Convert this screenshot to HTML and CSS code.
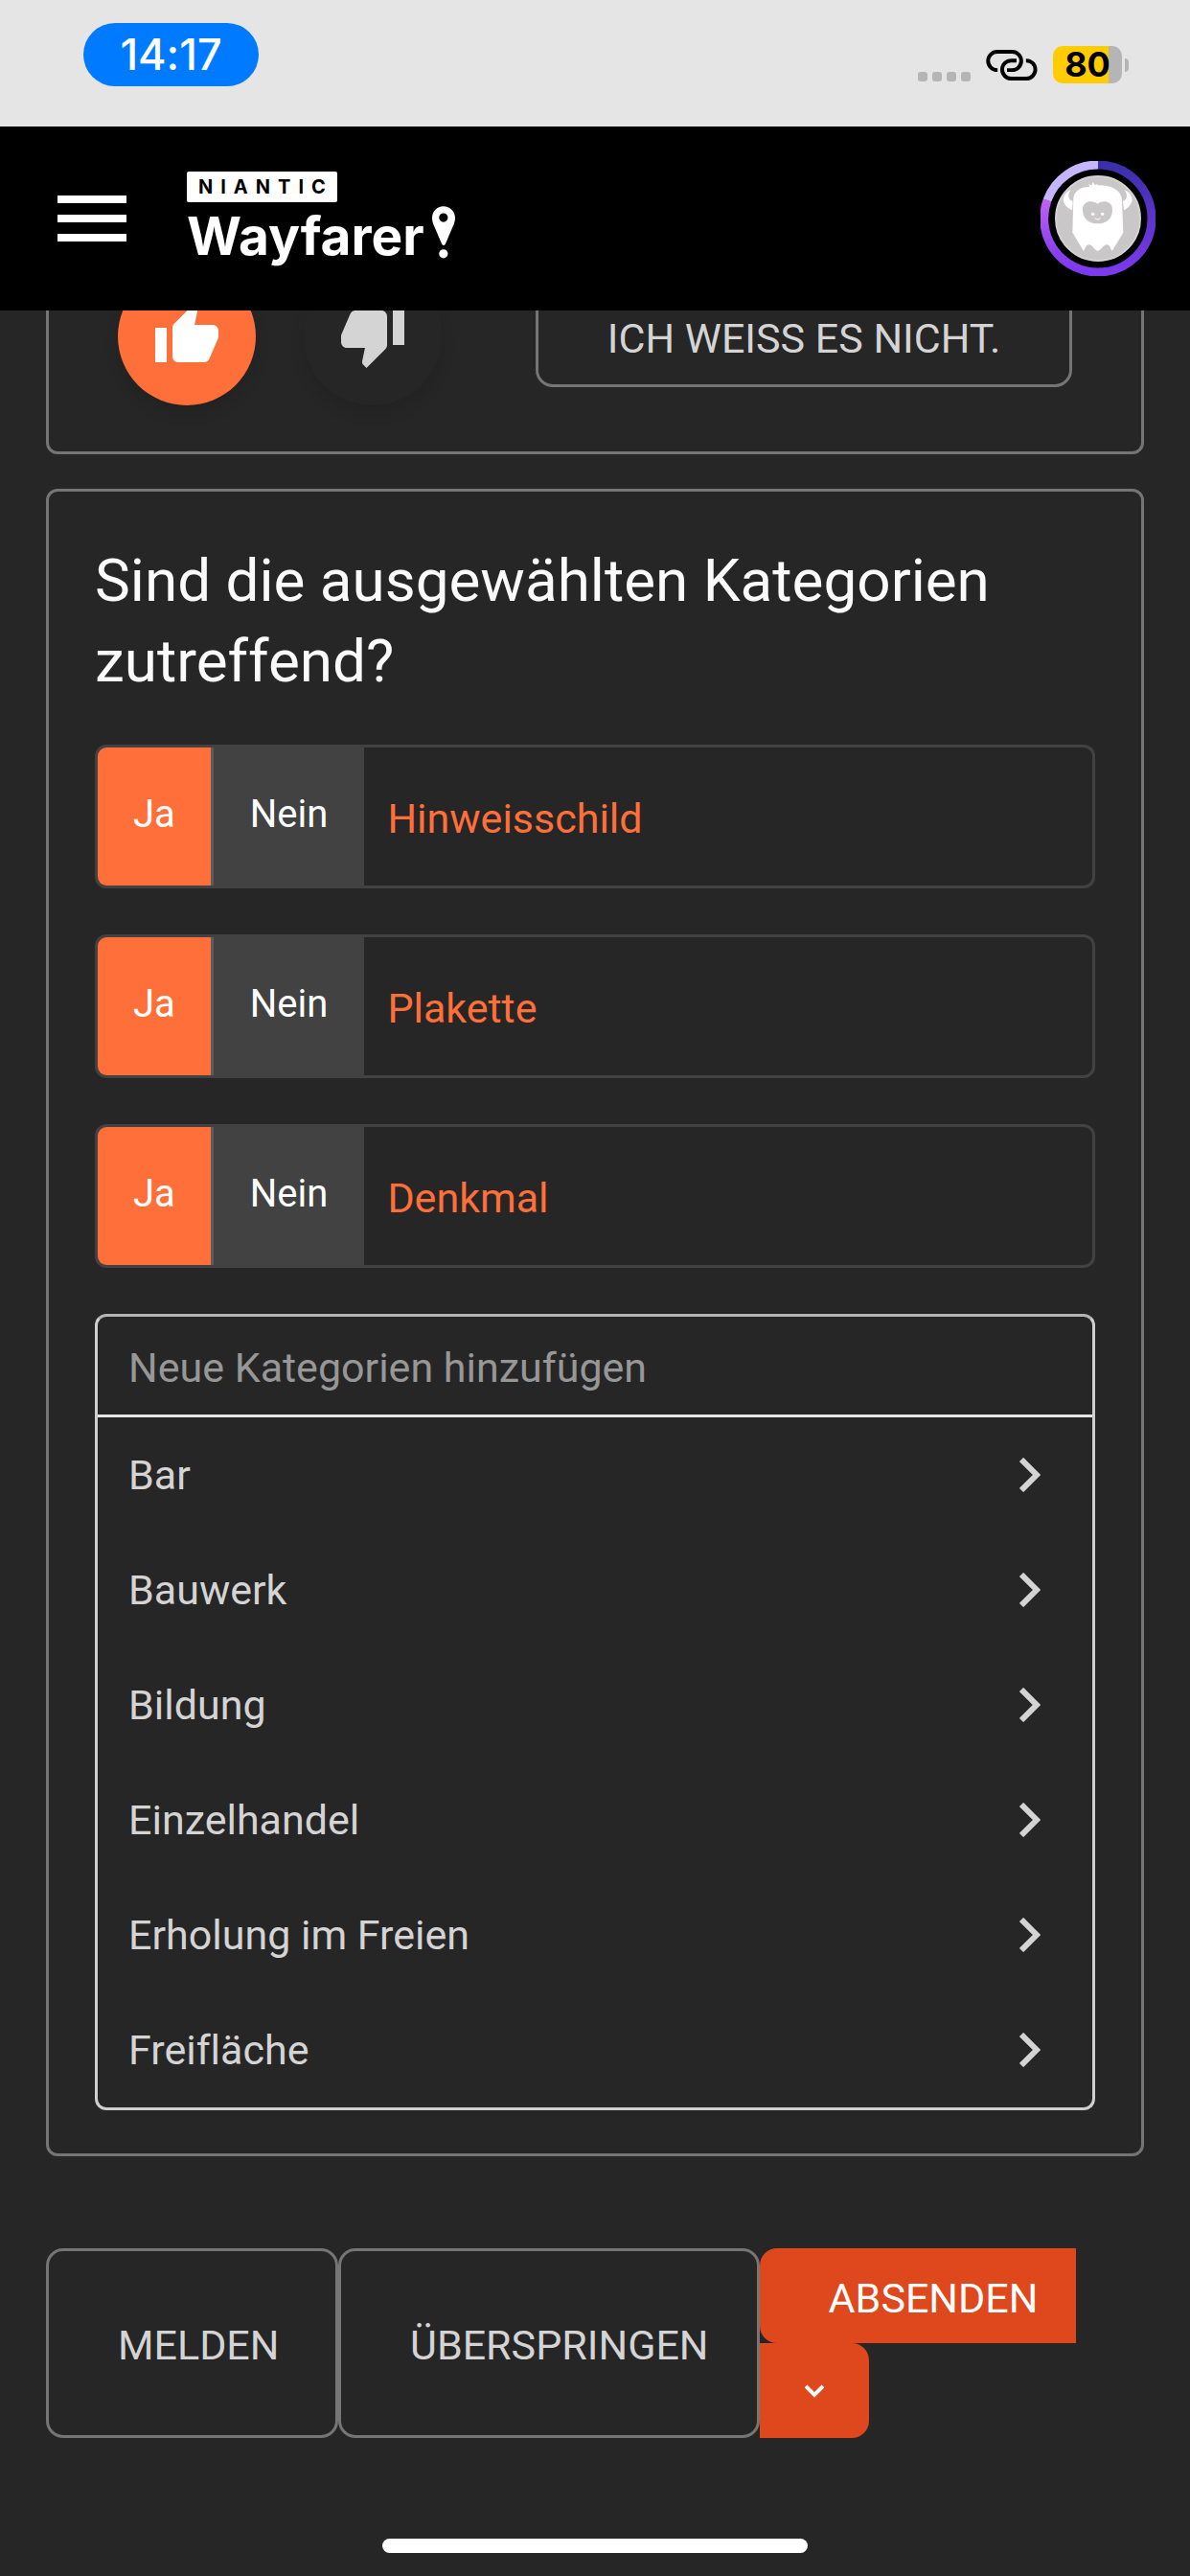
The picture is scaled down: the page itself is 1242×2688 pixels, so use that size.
FILE: index.html
```html
<!DOCTYPE html>
<html lang="de">

<head>
    <meta charset="UTF-8">
    <meta name="viewport" content="width=device-width, initial-scale=1.0">
    <title>Niantic Wayfarer</title>
    <link rel="stylesheet" href="styles.css">
</head>

<body>

    <div class="status-bar">
        <span class="time">14:17</span>
        <div class="status-icons">
            <div class="signal"><i></i><i></i><i></i><i></i></div>
            <svg class="link-icon" viewBox="384 155 162 97" fill="none" stroke="#000" stroke-width="12">
                <path d="M420 219H419A29 29 0 0 1 419 161H466A29 29 0 0 1 466 219H450" />
                <path d="M480 189H463A28.500 28.500 0 0 0 463 246H511A28.500 28.500 0 0 0 511 189H510" />
            </svg>
            <div class="battery-wrap">
                <div class="battery">80</div>
                <div class="battery-tip"></div>
            </div>
        </div>
    </div>

    <header class="header">
        <button class="menu-button" aria-label="Menü"><i></i><i></i><i></i></button>

        <a class="logo" href="#">
            <span class="logo-brand">NIANTIC</span>
            <span class="logo-name">
                Wayfarer
                <svg class="logo-pin" viewBox="780 131 73 166" fill="#fff">
                    <path fill-rule="evenodd" d="M816 131C836 131 853 147 853 168C853 178 850 186 846 195L822 251Q816 259 811 251L787 195C783 186 780 178 780 168C780 147 796 131 816 131ZM816 153A14 14 0 1 0 816 181A14 14 0 1 0 816 153Z" />
                    <circle cx="816" cy="282" r="14" />
                </svg>
            </span>
        </a>

        <button class="avatar" aria-label="Profil">
            <svg viewBox="6 8 120 120">
                <defs>
                    <linearGradient id="ring-right" x1="0" y1="0" x2="0" y2="1">
                        <stop offset="0" stop-color="#3b2fa8" />
                        <stop offset="1" stop-color="#7c3aed" />
                    </linearGradient>
                    <linearGradient id="ring-left" x1="0" y1="1" x2="0" y2="0">
                        <stop offset="0" stop-color="#7c3aed" />
                        <stop offset="0.3" stop-color="#8a41ee" />
                        <stop offset="1" stop-color="#c061f6" />
                    </linearGradient>
                </defs>
                <g fill="none" stroke-width="9">
                    <path stroke="url(#ring-right)" d="M66 12A56 56 0 0 1 66 124" />
                    <path stroke="url(#ring-left)" d="M66 124A56 56 0 0 1 13 49" />
                    <path stroke="#c4b5fd" d="M13 49A56 56 0 0 1 66 12" />
                </g>
                <circle cx="66" cy="68" r="44" fill="#c9c7c8" stroke="#d4d3d3" stroke-width="2" />
                <g transform="scale(.3333)" fill="#fff">
                    <path d="M118 248L121 140C123 118 145 104 172 105L168 95L178 101L181 90L189 99L198 96L195 100C235 98 270 112 273 145L277 248L242 306C236 298 236 286 226 286C214 286 208 304 197 305C186 304 182 286 170 286C160 286 158 298 153 306Z" />
                    <path d="M113 115C98 120 90 132 89 148C93 163 105 174 117 178L119 150C110 148 106 140 106 133C106 125 110 120 113 115Z" />
                    <path d="M281 115C296 120 304 132 305 148C301 163 289 174 279 178L276 150C284 148 288 140 288 133C288 125 284 120 281 115Z" />
                    <path fill="#c9c7c8" d="M197 158C185 147 150 146 150 176C150 205 170 220 197 220C224 220 243 205 243 176C243 146 208 147 197 158Z" />
                    <circle cx="182" cy="190" r="5" />
                    <circle cx="212" cy="190" r="5" />
                    <path fill="none" stroke="#fff" stroke-width="3" d="M188 203Q197 212 206 203" />
                </g>
            </svg>
        </button>
    </header>

    <main class="content">

        <section class="card vote-card">
            <button class="vote vote-active" aria-label="Daumen hoch">
                <svg viewBox="0 0 24 24" fill="currentColor">
                    <path d="M1 21h4V9H1v12zm22-11c0-1.100-.9-2-2-2h-6.310l.95-4.570.03-.32c0-.41-.17-.79-.44-1.060L14.170 1 7.590 7.590C7.220 7.950 7 8.450 7 9v10c0 1.100.9 2 2 2h9c.83 0 1.540-.5 1.840-1.220l3.020-7.050c.09-.23.14-.47.14-.73v-2z" />
                </svg>
            </button>
            <button class="vote" aria-label="Daumen runter">
                <svg viewBox="0 0 24 24" fill="currentColor">
                    <path d="M15 3H6c-.83 0-1.540.5-1.840 1.220l-3.020 7.050c-.09.23-.14.47-.14.73v2c0 1.100.9 2 2 2h6.310l-.95 4.570-.03.32c0 .41.17.79.44 1.060L9.830 23l6.590-6.590c.36-.36.58-.86.58-1.410V5c0-1.100-.9-2-2-2zm4 0v12h4V3h-4z" />
                </svg>
            </button>
            <button class="outline-button unsure">ICH WEISS ES NICHT.</button>
        </section>

        <section class="card category-card">
            <h2 class="question">Sind die ausgewählten Kategorien zutreffend?</h2>

            <div class="toggle-row">
                <button class="toggle toggle-yes">Ja</button>
                <button class="toggle">Nein</button>
                <span class="toggle-label">Hinweisschild</span>
            </div>
            <div class="toggle-row">
                <button class="toggle toggle-yes">Ja</button>
                <button class="toggle">Nein</button>
                <span class="toggle-label">Plakette</span>
            </div>
            <div class="toggle-row">
                <button class="toggle toggle-yes">Ja</button>
                <button class="toggle">Nein</button>
                <span class="toggle-label">Denkmal</span>
            </div>

            <div class="picker">
                <input class="picker-input" type="text" placeholder="Neue Kategorien hinzufügen" aria-label="Neue Kategorien hinzufügen">
                <button class="picker-item">Bar <svg class="chevron" viewBox="0 0 22 36"><path d="M2 2L18 18L2 34" /></svg></button>
                <button class="picker-item">Bauwerk <svg class="chevron" viewBox="0 0 22 36"><path d="M2 2L18 18L2 34" /></svg></button>
                <button class="picker-item">Bildung <svg class="chevron" viewBox="0 0 22 36"><path d="M2 2L18 18L2 34" /></svg></button>
                <button class="picker-item">Einzelhandel <svg class="chevron" viewBox="0 0 22 36"><path d="M2 2L18 18L2 34" /></svg></button>
                <button class="picker-item">Erholung im Freien <svg class="chevron" viewBox="0 0 22 36"><path d="M2 2L18 18L2 34" /></svg></button>
                <button class="picker-item">Freifläche <svg class="chevron" viewBox="0 0 22 36"><path d="M2 2L18 18L2 34" /></svg></button>
            </div>
        </section>

        <div class="actions">
            <button class="outline-button action report">MELDEN</button>
            <button class="outline-button action">ÜBERSPRINGEN</button>
            <div class="submit-group">
                <button class="submit">ABSENDEN</button>
                <button class="submit-more" aria-label="Weitere Optionen">
                    <svg viewBox="0 0 20 14" fill="none" stroke="#fff" stroke-width="4"><path d="M1 2L10 11L19 2" /></svg>
                </button>
            </div>
        </div>

    </main>

    <div class="home-indicator"></div>

</body>

</html>
```
FILE: styles.css
```css
* {
    box-sizing: border-box;
}

body {
    margin: 0;
    background-color: #262626;
    color: #d4d4d4;
    font-family: Roboto, "Liberation Sans", sans-serif;
    font-size: 43px;
    font-variant-ligatures: none;
}

button {
    padding: 0;
    border: none;
    background: none;
    color: inherit;
    font: inherit;
    font-variant-ligatures: none;
    cursor: pointer;
}

svg {
    display: block;
}

/* Status bar */
.status-bar {
    display: flex;
    justify-content: space-between;
    align-items: flex-start;
    height: 132px;
    padding: 24px 64px 0 87px;
    background-color: #e5e5e5;
    font-family: Inter, sans-serif;
}

.time {
    width: 183px;
    border-radius: 33px;
    background-color: #007aff;
    color: #fff;
    font-size: 45px;
    font-weight: 500;
    line-height: 66px;
    text-align: center;
}

.status-icons {
    display: flex;
    align-items: flex-end;
    gap: 16px;
    margin-top: 24px;
}

.signal {
    display: flex;
    gap: 5px;
    padding-bottom: 2px;
}

.signal i {
    width: 10px;
    height: 10px;
    border-radius: 3px;
    background-color: #b5b5b5;
}

.link-icon {
    width: 54px;
    height: 32px;
    margin-bottom: 3px;
}

.battery-wrap {
    display: flex;
    align-items: center;
    gap: 3px;
}

.battery {
    width: 72px;
    border-radius: 10px;
    background: linear-gradient(to right, #ffcc00 58px, #b5b5b5 58px);
    color: #000;
    font-size: 36px;
    font-weight: 700;
    line-height: 39px;
    text-align: center;
}

.battery-tip {
    width: 4px;
    height: 14px;
    border-radius: 0 4px 4px 0;
    background-color: #b5b5b5;
}

/* Header, lies over the scrolled cards */
.header {
    position: relative;
    z-index: 1;
    display: flex;
    align-items: center;
    height: 192px;
    padding: 0 36px 0 60px;
    background-color: #000;
}

.menu-button {
    display: flex;
    flex-direction: column;
    gap: 12px;
    width: 72px;
    margin-right: 63px;
}

.menu-button i {
    height: 8px;
    background-color: #fff;
}

.logo {
    display: flex;
    flex-direction: column;
    align-items: flex-start;
    gap: 8px;
    padding-bottom: 4px;
    color: #fff;
    font-family: Inter, sans-serif;
    font-weight: 700;
    text-decoration: none;
}

.logo-brand {
    padding: 0 4px 0 12px;
    border-radius: 2px;
    background-color: #fff;
    color: #000;
    font-size: 20px;
    line-height: 32px;
    letter-spacing: 8px;
}

.logo-name {
    display: flex;
    align-items: flex-start;
    gap: 8px;
    font-size: 55px;
    line-height: 55px;
}

.logo-pin {
    width: 24px;
    height: 55px;
    margin-top: -4px;
}

.avatar {
    width: 120px;
    height: 120px;
    margin-left: auto;
}

/* Cards */
.content {
    padding: 0 48px;
}

.card {
    border: 3px solid #757575;
    border-radius: 12px;
}

.vote-card {
    display: flex;
    align-items: center;
    gap: 50px;
    margin-top: -96px;
    padding: 48px 72px;
}

.vote {
    display: flex;
    align-items: center;
    justify-content: center;
    width: 144px;
    height: 144px;
    border-radius: 50%;
    box-shadow: 0 9px 15px rgba(0, 0, 0, 0.1);
}

.vote svg {
    width: 72px;
    height: 72px;
}

.vote-active {
    background-color: #ff6f39;
    color: #fff;
}

.outline-button {
    padding-top: 4px;
    border: 3px solid #757575;
    border-radius: 18px;
}

.unsure {
    flex: 1;
    height: 106px;
    margin-left: 48px;
}

.category-card {
    display: flex;
    flex-direction: column;
    gap: 48px;
    margin-top: 36px;
    padding: 51px 48px 45px;
}

.question {
    margin: 0 0 -3px;
    color: #fafafa;
    font-size: 62px;
    font-weight: 400;
    line-height: 84px;
}

.toggle-row {
    display: flex;
    height: 150px;
    border: 3px solid #424242;
    border-radius: 12px;
    overflow: hidden;
}

.toggle {
    padding: 0 38px 6px;
    background-color: #424242;
    color: #fff;
    font-size: 40px;
}

.toggle-yes {
    padding: 0 37px 6px;
    border-right: 3px solid #5c5c5c;
    background-color: #ff6f39;
}

.toggle-label {
    align-self: center;
    padding: 4px 0 0 24px;
    color: #ff6f39;
}

.picker {
    display: flex;
    flex-direction: column;
    border: 3px solid #cfcfcf;
    border-top-color: #b5b5b5;
    border-radius: 12px;
    overflow: hidden;
}

.picker-input {
    height: 105px;
    padding: 4px 32px 0;
    border: none;
    border-bottom: 3px solid #e5e5e5;
    background: none;
    color: #d4d4d4;
    font: inherit;
}

.picker-input::placeholder {
    color: #979797;
}

.picker-item {
    display: flex;
    align-items: center;
    justify-content: space-between;
    height: 120px;
    padding: 0 54px 0 32px;
}

.chevron {
    width: 22px;
    height: 36px;
    fill: none;
    stroke: #d4d4d4;
    stroke-width: 6;
}

/* Bottom buttons */
.actions {
    display: flex;
    margin-top: 96px;
}

.action {
    padding: 4px 50px 0 72px;
    text-align: left;
}

.report {
    min-width: 305px;
}

.submit-group {
    display: flex;
    flex-direction: column;
    align-items: flex-start;
}

.submit,
.submit-more {
    height: 99px;
    background-color: #df471c;
    color: #fff;
}

.submit {
    padding: 4px 40px 0 72px;
    border-radius: 18px 0 0 18px;
}

.submit-more {
    display: flex;
    align-items: center;
    justify-content: center;
    width: 114px;
    border-radius: 0 18px 18px 0;
}

.submit-more svg {
    width: 20px;
    height: 14px;
}

.home-indicator {
    width: 444px;
    height: 15px;
    margin: 105px auto 24px;
    border-radius: 8px;
    background-color: #fff;
}
```
